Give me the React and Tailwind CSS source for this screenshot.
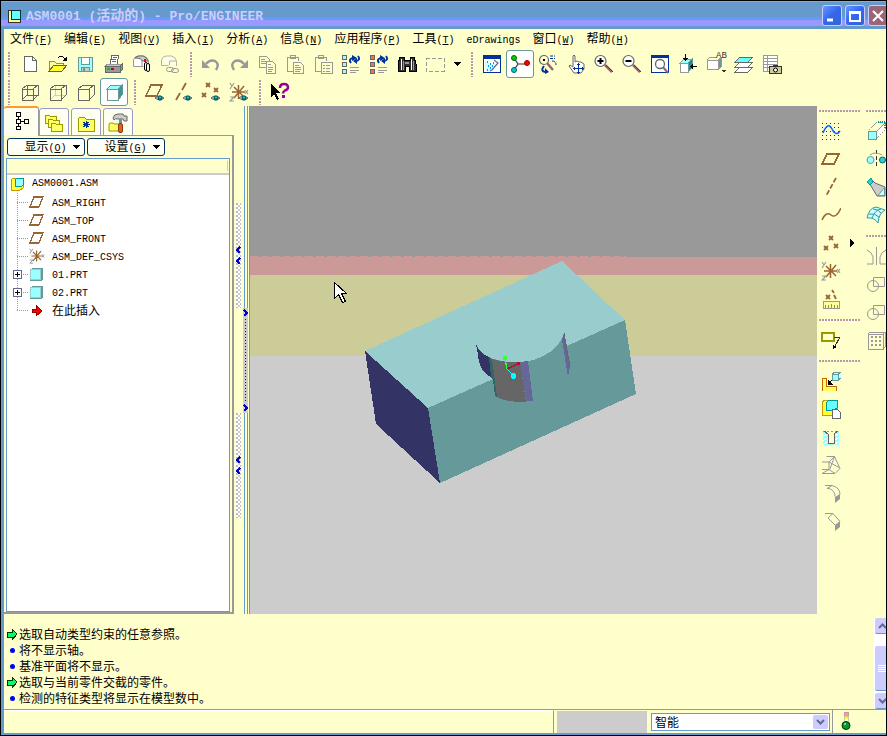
import { clsx } from 'clsx';

const brown = '#996633';

function Glyph({ children, w = 20, h = 20 }) {
  return (
    <svg width={w} height={h} viewBox={`0 0 ${w} ${h}`} fill="none" shapeRendering="crispEdges" className="shrink-0" aria-hidden="true">
      {children}
    </svg>
  );
}

const crossPath = (x, y) => `M${x} ${y}l4 4M${x + 4} ${y}l-4 4`;

const Eye = () => (
  <g shapeRendering="auto">
    <path d="M10 16q4-4 9 0q-4 4-9 0z" fill="#ccc" stroke="#666" />
    <circle cx="15" cy="16" r="2.5" fill="#006666" />
    <circle cx="15" cy="15.5" r="1" fill="#33cccc" />
  </g>
);

const Csys = () => (
  <g shapeRendering="auto">
    <path d="M9.500 3v14M3 10h13M5 5l10 10M15 4L5 16" stroke={brown} strokeWidth="1.500" />
    <path d="M1 1l2 3M5 1L1 7M1 15h4l-4 4h4M16 8l3 4M19 8l-3 4" stroke="#999" strokeWidth="1.200" />
  </g>
);

const Cube = ({ face, side, top, dark }) => (
  <g stroke={dark || '#669999'}>
    <path d="M3 7h11v11H3z" fill={face} />
    <path d="M3 7l4-4h11l-4 4z" fill={top} />
    <path d="M14 7l4-4v10l-4 5z" fill={side} />
  </g>
);

const Lens = ({ sign }) => (
  <g shapeRendering="auto">
    <path d="M11 11l7 7" stroke="#996666" strokeWidth="2.5" />
    <path d="M12 11l7 7" stroke="#663333" />
    <circle cx="6.500" cy="7" r="5.500" fill="#fff" stroke="#666" strokeWidth="1.200" />
    <path d={sign} stroke="#000" strokeWidth="2" />
  </g>
);

const Clipboard = () => (
  <path d="M9 17H2V3h11v4M5 3V1h5v3H5z" stroke="#999" />
);

const Regen = ({ c }) => (
  <g>
    <path d="M1 1h4v4H1zM1 8h4v4H1zM1 15h4v4H1z" fill={c} stroke="#666" />
    <path d="M9 13h9M9 16h9M9 18h6" stroke="#999" />
    <g shapeRendering="auto">
      <path d="M10 9q-3-4 2-5M17 2q3 4-2 5" stroke="#003399" strokeWidth="2" />
      <path d="M11 1l5 3-5 3zM16 4l-4 3 4 3z" fill="#003399" />
    </g>
  </g>
);

const icons = {
  new: <path d="M4 2h8l4 4v11H4zM12 2v4h4" fill="#fff" stroke="#666" />,
  open: (
    <g>
      <path d="M1 17V7h5l2 2h7v3" fill="#ffff99" stroke="#999900" />
      <path d="M1 17l5-6h13l-5 6z" fill="#ffff33" stroke="#666633" />
      <path d="M10 4q4-4 7 1" stroke="#000" />
      <path d="M19 2v5h-5z" fill="#000" />
    </g>
  ),
  save: (
    <g>
      <path d="M2 3h14v14H2z" fill="#99ffff" stroke="#669999" />
      <path d="M5 3h8v7H5z" fill="#fff" stroke="#669999" />
      <path d="M5 13h8v4H5z" fill="#ccc" stroke="#669999" />
      <path d="M7 14h2v3H7z" fill="#669999" />
    </g>
  ),
  print: (
    <g>
      <path d="M6 10l2-9h7l-2 9z" fill="#fff" stroke="#666" />
      <path d="M9 3h4M8 5h4M8 7h4" stroke="#666" />
      <path d="M1 12l3-2h14l-2 2z" fill="#ccc" stroke="#999" />
      <path d="M1 12h15v6H1z" fill="#999" stroke="#666" />
      <path d="M16 12l2-2v6l-2 2z" fill="#999" stroke="#666" />
      <path d="M3 14h3v2H3z" fill="#0c0" />
      <path d="M7 14h3v2H7z" fill="#c00" />
    </g>
  ),
  mail: (
    <g shapeRendering="auto">
      <path d="M1.500 12.500V6q1-4 5-4h5q4 1 5 5v5" fill="#fff" stroke="#999" />
      <path d="M3 4q2-2 4-2h4q4 1 5 5h-6q0-3-7-3z" fill="#ccc" stroke="#666" />
      <path d="M1.500 12.500h10M10 7v5" stroke="#999" />
      <path d="M12 5h2v3h-2z" fill="#f00" />
      <rect x="12.500" y="8.500" width="3" height="8" rx="1.500" fill="#fff" stroke="#000" />
      <rect x="14.500" y="9.500" width="3" height="8" rx="1.500" fill="#fff" stroke="#000" />
    </g>
  ),
  link: (
    <g stroke="#b3b3a0" shapeRendering="auto">
      <path d="M1.500 11.500V6q1-4 5-4h5q4 1 5 5v5M1.500 11.500h7M9.500 11V7h7" fill="#ffffe6" />
      <rect x="6.500" y="13.500" width="7" height="4" rx="2" stroke="#999" />
      <rect x="11.500" y="14.500" width="7" height="4" rx="2" stroke="#999" />
    </g>
  ),
  undo: (
    <g shapeRendering="auto">
      <path d="M5 10q4-5 9-3 5 3 1 9" stroke="#999" strokeWidth="2.500" />
      <path d="M1 6v8h8z" fill="#999" />
    </g>
  ),
  redo: (
    <g shapeRendering="auto">
      <path d="M15 10q-4-5-9-3-5 3-1 9" stroke="#999" strokeWidth="2.500" />
      <path d="M19 6v8h-8z" fill="#999" />
    </g>
  ),
  copy: (
    <g stroke="#999">
      <path d="M2 2h7l3 3v8H2zM4 5h4M4 7h6M4 9h6" fill="#ffffcc" />
      <path d="M9 7h6l3 3v9H9zM11 10h3M11 13h5M11 15h5M11 17h4" fill="#ffffcc" />
    </g>
  ),
  paste: (
    <g stroke="#999">
      <Clipboard />
      <path d="M8 8h7l3 3v8H8zM10 11h4M10 13h6M10 15h6M10 17h5" fill="#ffffcc" />
    </g>
  ),
  pasteSpecial: (
    <g stroke="#999">
      <Clipboard />
      <path d="M8 8h11v11H8z" fill="#ffffcc" />
      <path d="M10 11h2M10 14h2M10 17h2M13 11h4M13 14h4M13 17h4" />
    </g>
  ),
  regen: <Regen c="#99ffff" />,
  regenRed: <Regen c="#ff6666" />,
  find: (
    <g>
      <path d="M3 3h4v3h6V3h4l2 7v7h-7v-5H8v5H1v-7z" fill="#333" stroke="#000" />
      <path d="M4 5v11M14 5v11" stroke="#fff" />
      <path d="M6 7v9M16 7v9" stroke="#999" />
      <path d="M8 9h4" stroke="#999" strokeWidth="2" />
    </g>
  ),
  select: <path d="M1 4h18v13H1z" stroke="#999" strokeDasharray="4 2" />,
  spin: (
    <g>
      <path d="M1.500 1.500h17v17h-17z" fill="#fff" stroke="#003399" />
      <path d="M1 1h18v4H1z" fill="#003399" />
      <path d="M3 7l11 4-6 6-5-1z" fill="#ccffff" />
      <path d="M5 8h1M8 10h1M6 12h1M10 12h1M8 14h1M5 16h1M11 9h1" stroke="#0099ff" strokeWidth="1.500" />
      <path d="M12 6l4 3-6 7-2 1" stroke="#669" strokeWidth="1.200" shapeRendering="auto" />
    </g>
  ),
  center: (
    <g shapeRendering="auto">
      <path d="M4 4l4 6-4 6M8 10h9" stroke="#333" strokeWidth="1.200" />
      <circle cx="4" cy="4" r="2.500" fill="#00cc00" stroke="#006600" />
      <circle cx="4" cy="16" r="2.500" fill="#00cccc" stroke="#006666" />
      <circle cx="17" cy="9" r="2.500" fill="#f00" stroke="#900" />
    </g>
  ),
  orient: (
    <g shapeRendering="auto">
      <path d="M9 9l6 7" stroke="#996666" strokeWidth="2.500" />
      <circle cx="6" cy="6" r="4.500" fill="#ffffcc" stroke="#666" strokeWidth="1.200" />
      <path d="M5 5h2v2H5z" fill="#000" />
      <path d="M12 2h5M12 4.500h5M14 7q4 0 4 4" stroke="#003399" strokeDasharray="3 1" />
      <path d="M6 12q-4 5 1 6" stroke="#003399" strokeWidth="2" />
      <path d="M7 14v6l4-2z" fill="#003399" />
    </g>
  ),
  pan: (
    <g>
      <path d="M7 10V2q1-2 2 0v6l2-1 2 1 2 0 3 2v5l-3 4H8l-5-7 1-1 3 2z" fill="#fff" stroke="#666" shapeRendering="auto" />
      <path d="M12 10v9M8 14.500h9" stroke="#003399" />
      <path d="M12.500 9l2 2h-4zM12.500 20l2-2h-4zM7 14.500l2-2v4zM18 14.500l-2-2v4z" fill="#003399" />
    </g>
  ),
  zoomIn: <Lens sign="M3.500 7h6M6.500 4v6" />,
  zoomOut: <Lens sign="M3.500 7h6" />,
  refit: (
    <g>
      <path d="M1.500 1.500h17v17h-17z" fill="#fff" stroke="#003399" />
      <path d="M1 1h18v3H1z" fill="#003399" />
      <g shapeRendering="auto">
        <circle cx="10" cy="10" r="4.500" stroke="#666" strokeWidth="1.300" fill="#fff" />
        <path d="M13 13l5 6" stroke="#996666" strokeWidth="2" />
      </g>
    </g>
  ),
  reorient: (
    <g>
      <path d="M2 9h8v9H2z" fill="#fff" stroke="#999" />
      <path d="M2 9l4-4h8l-4 4z" fill="#99ffff" stroke="#999" />
      <path d="M10 9l4-4v9l-4 4z" fill="#009999" stroke="#669999" />
      <path d="M7 0v6M13 12h6" stroke="#000" />
      <path d="M5 4h5L7.500 7zM15 10v5l-3-2.500z" fill="#000" />
    </g>
  ),
  saved: (
    <g>
      <path d="M1 6h11v9H1z" fill="#fff" stroke="#999" />
      <path d="M1 6l3-3h7" stroke="#999" />
      <path d="M12 6l3-2v9l-3 2z" fill="#669999" stroke="#999" />
      <path d="M15 16h5l-2 3z" fill="#333" />
    </g>
  ),
  layers: (
    <g stroke="#666">
      <path d="M1 18l5-5h13l-5 5z" fill="#fff" />
      <path d="M1 13l5-5h13l-5 5z" fill="#fff" />
      <path d="M1 8l5-5h13l-5 5z" fill="#66ffff" />
    </g>
  ),
  viewmgr: (
    <g>
      <path d="M1 1h14v16H1z" fill="#fff" />
      <path d="M1 1h14v16H1zM5 1v16M1 4h14M1 7h14M1 10h14M1 13h7" stroke="#999" />
      <path d="M7.500 12.500h12v7h-12z" fill="#cccc99" stroke="#333" />
      <path d="M11 11h5v2h-5z" fill="#333" />
      <circle cx="13.500" cy="16" r="2" fill="#fff" stroke="#000" shapeRendering="auto" />
    </g>
  ),
  wire: <path d="M2 7h11v11H2zM7 3h11v10H7zM2 7l5-4M13 7l5-4M2 18l5-5M13 18l5-5" stroke="#666" />,
  hidden: (
    <g>
      <path d="M7 3v10h11M2 18l5-5" stroke="#ccc" />
      <path d="M2 7h11v11H2zM2 7l5-4h11v10l-5 5M13 7l5-4" stroke="#666" />
    </g>
  ),
  nohidden: <path d="M2 7h11v11H2zM2 7l5-4h11v10l-5 5M13 7l5-4" stroke="#666" />,
  shaded: <Cube face="#fff" side="#339999" top="#99ffff" />,
  plane: <path d="M1 15L6 5h12l-5 10z" stroke={brown} strokeWidth="1.500" />,
  planeEye: <g><path d="M1 14L6 3h11l-5 11z" stroke={brown} strokeWidth="1.500" /><Eye /></g>,
  axisEye: <g><path d="M13 1l-4 7M7 11l-4 7" stroke={brown} strokeWidth="1.800" shapeRendering="auto" /><Eye /></g>,
  pointEye: <g><path d={`${crossPath(5, 1)}${crossPath(13, 6)}${crossPath(1, 11)}`} stroke={brown} strokeWidth="1.800" shapeRendering="auto" /><Eye /></g>,
  csysEye: <g><Csys /><Eye /></g>,
  help: (
    <g>
      <path d="M1 2v13l3-3 3 6 2-1-3-6h4z" fill="#000" />
      <g shapeRendering="auto">
        <path d="M10 6q0-4 4-4 4 0 4 3.500 0 2-3 3-2 1-2 3" stroke="#990099" strokeWidth="2.500" />
        <path d="M12 13h3v3h-3z" fill="#990099" />
      </g>
    </g>
  ),
  sketch: (
    <g>
      <path d="M1 2h19M1 6h19M1 10h19M1 14h19M1 18h19" stroke="#003399" strokeDasharray="1 3" />
      <path d="M2 12q5-12 9-4 4 8 8 2" stroke="#0066ff" strokeWidth="1.500" shapeRendering="auto" />
    </g>
  ),
  axis: <path d="M15 1L5 19" stroke={brown} strokeWidth="1.800" strokeDasharray="5 2" shapeRendering="auto" />,
  curve: <path d="M1 15q4-9 9-5t10-7" stroke={brown} strokeWidth="1.500" shapeRendering="auto" />,
  points: <path d={`${crossPath(8, 3)}${crossPath(3, 13)}${crossPath(13, 11)}`} stroke={brown} strokeWidth="1.800" shapeRendering="auto" />,
  csys: <Csys />,
  analysis: (
    <g>
      <path d={`${crossPath(5, 6)}M11 1l2 3M13 6l2 4`} stroke={brown} strokeWidth="1.800" shapeRendering="auto" />
      <path d="M2 12h16v7H2z" fill="#ffff99" stroke="#999" />
      <path d="M4 19v-3M7 19v-3M10 19v-4M13 19v-3M16 19v-3" stroke="#999933" />
    </g>
  ),
  annotate: (
    <g>
      <path d="M1 3h12v8H1z" stroke="#999900" strokeWidth="1.200" />
      <path d="M13 7h6l-6 11" stroke="#333" />
      <path d="M12 15v4l4-2z" fill="#000" />
    </g>
  ),
  assemble: (
    <g>
      <path d="M1 7h4v8h10v5H1z" fill="#ffff66" stroke="#cc6600" />
      <path d="M11 3h6v6h-6z" fill="#99ffff" stroke="#669999" />
      <path d="M11 3l3-2h6l-3 2M20 1v6l-3 2" fill="#ccffff" stroke="#669999" />
      <path d="M11 9l-3 3" stroke="#000" />
      <path d="M7 9v5h5z" fill="#000" />
    </g>
  ),
  create: (
    <g>
      <path d="M1 3l3-2h12v12l-3 3H1z" fill="#ffff33" stroke="#cc9900" />
      <path d="M5 4l3-3h8v8l-3 2H5z" fill="#66ffff" stroke="#009999" />
      <path d="M11 10h5l3 3v6h-8z" fill="#fff" stroke="#666" />
    </g>
  ),
  hole: (
    <g>
      <path d="M2 4l5 3v10h6V7l5-3v14H2z" fill="#99ffff" />
      <path d="M2 10l5-4M2 14l5-4M2 18l5-4M13 10l5-4M13 14l5-4M13 18l5-4" stroke="#fff" />
      <path d="M2 4h16" stroke="#999" strokeDasharray="2 2" />
      <path d="M8 7h5v9H8z" fill="#ffffcc" />
      <path d="M3 4l4 3v9h6V7l4-3" stroke="#666" />
    </g>
  ),
  draft: (
    <path d="M5.500 1.500h8l5.500 12-5 5H1M1 7h7v7.500H1M8 7l5.500-5.500M1 18.500l7-4 6 4M8 7l11 6M13.500 1.500L9 14" stroke="#999" shapeRendering="auto" />
  ),
  round: (
    <g shapeRendering="auto">
      <path d="M4 2.500h7q8 2 8 9M6 5.500h2q6 2 6 8M6 5.500l5-3" stroke="#999" />
      <path d="M14 14l5-3v5l-5 4z" fill="#999" />
    </g>
  ),
  chamfer: (
    <g shapeRendering="auto">
      <path d="M4 2.500h8l7 8M7 7l7 7M7 7l5-4.500" stroke="#999" />
      <path d="M14 14l5-4v6l-5 4z" fill="#999" />
    </g>
  ),
  copyGeom: (
    <g>
      <path d="M10 10l8-7v7l-8 8z" fill="#fff" />
      <path d="M3 9l8-8h8v8l-8 8" stroke="#999" strokeDasharray="2 1" />
      <path d="M11 10l8-8" stroke="#999" />
      <path d="M12 1h7v6" stroke="#009999" strokeDasharray="1 1" strokeWidth="2" />
      <path d="M2 10h8v8H2z" fill="#99ffff" stroke="#669999" />
    </g>
  ),
  mirror: (
    <g shapeRendering="auto">
      <circle cx="4.500" cy="11" r="3.500" fill="#99ffff" stroke="#669999" />
      <circle cx="16.500" cy="11" r="3" fill="#33cccc" stroke="#006666" />
      <path d="M10.500 1v18" stroke="#333" strokeDasharray="4 2" />
      <path d="M4 6q5-4 12 0" stroke="#999" />
    </g>
  ),
  sweep: (
    <g shapeRendering="auto">
      <path d="M5 2L2 5l3 4 6 10h8v-9L9 6z" fill="#ccc" stroke="#666" />
      <path d="M1 5l4-4 2 4-3 3z" fill="#33cccc" stroke="#009999" />
      <path d="M12 18.500l6.500-8v8z" fill="#ccffff" stroke="#669999" />
    </g>
  ),
  surface: (
    <g shapeRendering="auto">
      <path d="M1 13q2-10 9-11l9 3q-6 3-7 13-4-6-11-5z" fill="#ccffff" stroke="#339999" />
      <path d="M6 13Q9 5 15 4M3 9q6-1 10 3M7 4q5 0 8 4" stroke="#339999" />
    </g>
  ),
  mirrorGray: <path d="M10.500 1v18M1 4q5 2 6 7v7H1M20 4q-5 2-6 7v7h6" stroke="#999" shapeRendering="auto" />,
  merge: <g stroke="#999" shapeRendering="auto"><circle cx="7" cy="12" r="5.500" /><path d="M7.500 3.500h11v9h-11z" /></g>,
  pattern: (
    <g>
      <path d="M2 4h15v15H2zM2 4l2-2h15v15l-2 2M17 4l2-2" stroke="#999" />
      <path d="M5 7h10M5 11h10M5 15h10" stroke="#999" strokeWidth="2" strokeDasharray="2 2" />
    </g>
  ),
};

const fileTools = ['new', 'open', 'save', 'print', 'mail', 'link'];
const editTools = ['undo', 'redo', 'copy', 'paste', 'pasteSpecial', 'regen', 'regenRed', 'find', 'select'];
const viewTools = ['spin', 'center', 'orient', 'pan', 'zoomIn', 'zoomOut', 'refit', 'reorient', 'saved', 'layers', 'viewmgr'];
const displayTools = ['wire', 'hidden', 'nohidden', 'shaded'];
const datumTools = ['planeEye', 'axisEye', 'pointEye', 'csysEye'];

const menus = [
  ['文件', 'F'], ['编辑', 'E'], ['视图', 'V'], ['插入', 'I'], ['分析', 'A'], ['信息', 'N'],
  ['应用程序', 'P'], ['工具', 'T'], ['eDrawings'], ['窗口', 'W'], ['帮助', 'H'],
];

const messages = [
  { prompt: true, text: '选取自动类型约束的任意参照。' },
  { text: '将不显示轴。' },
  { text: '基准平面将不显示。' },
  { prompt: true, text: '选取与当前零件交截的零件。' },
  { text: '检测的特征类型将显示在模型数中。' },
];

const tree = [
  { name: 'ASM_RIGHT', kind: 'plane' },
  { name: 'ASM_TOP', kind: 'plane' },
  { name: 'ASM_FRONT', kind: 'plane' },
  { name: 'ASM_DEF_CSYS', kind: 'csys' },
  { name: '01.PRT', kind: 'part' },
  { name: '02.PRT', kind: 'part' },
  { name: '在此插入', kind: 'insert' },
];

const Latin = ({ children }) => (
  <span className="font-['Liberation_Mono',monospace] text-[10px]">{children}</span>
);

function Label({ text, hotkey }) {
  return (
    <>
      {/^[\w.]+$/.test(text) ? <Latin>{text}</Latin> : text}
      {hotkey && <Latin>(<u>{hotkey}</u>)</Latin>}
    </>
  );
}

function Tool({ name, active }) {
  return (
    <button
      aria-label={name}
      className={clsx('flex h-7 w-7 shrink-0 items-center justify-center', active && 'rounded-[3px] border border-[#669999] bg-white')}
    >
      <span className="relative flex">
        <Glyph>{icons[name]}</Glyph>
        {name === 'saved' && (
          <span className="absolute left-2.5 -top-1 font-['Liberation_Mono',monospace] text-[9px] leading-3 text-[#333]">AB</span>
        )}
      </span>
    </button>
  );
}

const Tools = ({ names, active }) => names.map((n) => <Tool key={n} name={n} active={n === active} />);

const VSep = ({ first }) => (
  <span className={clsx('flex shrink-0 justify-center', first ? 'w-3 pr-0.5' : 'w-[13px]')}>
    <span className="h-[25px] w-0.5 bg-[repeating-linear-gradient(to_bottom,#c99_0_1px,#a99_1px_2px,#fff_2px_3px)]" />
  </span>
);

const HSep = ({ first }) => (
  <span className={clsx('flex w-full shrink-0 pl-0.5', first ? 'h-[11px] pt-1' : 'h-[13px] pt-1.5')}>
    <span className="h-0.5 w-full bg-[repeating-linear-gradient(to_right,#c99_0_1px,#a99_1px_2px,#fff_2px_3px)]" />
  </span>
);

const CaptionButton = ({ label, close, children }) => (
  <button
    aria-label={label}
    className={clsx('flex h-[21px] w-5 shrink-0 items-center justify-center rounded-[3px] border border-[#ccccff]', close ? 'bg-[#996677]' : 'bg-[linear-gradient(135deg,#69f,#36e_50%,#36c)]')}
  >
    <svg width="14" height="14" viewBox="0 0 14 14" fill="none" stroke="#fff" strokeWidth="2">{children}</svg>
  </button>
);

function TitleBar() {
  return (
    <header className="flex h-7 shrink-0 items-center overflow-hidden border-t border-[#9999ff] bg-[linear-gradient(to_bottom,#69c_0_15px,#69f_15px_18px,#99f_18px_24px,#69c_24px)] pl-1.5">
      <Glyph w={14} h={14}>
        <path d="M1 1h12v12H1z" fill="#ffff99" stroke="#333" />
        <path d="M4 1h9v9H4z" fill="#66ffff" stroke="#003333" />
      </Glyph>
      <h1 className="ml-[5px] grow whitespace-nowrap text-[14px] leading-5 font-bold text-[#ccccff]">
        <span className="font-['Liberation_Mono',monospace] text-[13px]">ASM0001 (</span>活动的
        <span className="font-['Liberation_Mono',monospace] text-[13px]">) - Pro/ENGINEER</span>
      </h1>
      <div className="flex gap-[3px]">
        <CaptionButton label="最小化"><path d="M2 11h6" strokeWidth="3" /></CaptionButton>
        <CaptionButton label="最大化"><path d="M2 3h10v9H2zM2 4h10" /></CaptionButton>
        <div className="-mr-0.5 flex"><CaptionButton label="关闭" close><path d="M2 2l10 10M12 2L2 12" /></CaptionButton></div>
      </div>
    </header>
  );
}

function NodeIcon({ kind }) {
  return (
    <Glyph w={16} h={16}>
      {kind === 'plane' && <path d="M1 13L5 3h9l-4 10z" stroke={brown} strokeWidth="1.300" />}
      {kind === 'csys' && <g transform="scale(.8)"><Csys /></g>}
      {kind === 'part' && (
        <g>
          <path d="M1 4l2-2h11v11l-2 2H1z" fill="#669999" />
          <path d="M1.500 3.500h10v10h-10z" fill="#99ffff" stroke="#99cccc" />
        </g>
      )}
      {kind === 'insert' && <path d="M3 7h4V3l6 6-6 5v-4H3z" fill="#f00" stroke="#900" />}
    </Glyph>
  );
}

function ModelTree() {
  return (
    <ul className="grow overflow-hidden">
      <li>
        <button className="flex h-[18px] items-center gap-2 pl-[3px]">
          <Glyph w={14} h={14}>
            <path d="M1 3l2-2h10v10l-3 2H1z" fill="#ffff33" stroke="#cc9900" />
            <path d="M5 3l2-2h6v7l-1 1H5z" fill="#99ffff" stroke="#009999" />
          </Glyph>
          <Latin>ASM0001.ASM</Latin>
        </button>
        <ul>
          {tree.map(({ name, kind }, i) => (
            <li key={name}>
              <button className="flex h-[18px] items-center">
                <Glyph w={22} h={18}>
                  <path d={i === tree.length - 1 ? 'M10.500 0v9' : 'M10.500 0v18'} stroke="#999" strokeDasharray="1 1" />
                  <path d="M10 9.500h12" stroke="#999" strokeDasharray="1 1" />
                  {kind === 'part' && (
                    <g>
                      <path d="M6.500 5.500h8v8h-8z" fill="#fff" stroke="#669" />
                      <path d="M8 9.500h5M10.500 7v5" stroke="#000" />
                    </g>
                  )}
                </Glyph>
                <NodeIcon kind={kind} />
                <span className="ml-[7px]"><Label text={name} /></span>
              </button>
            </li>
          ))}
        </ul>
      </li>
    </ul>
  );
}

const Folder = ({ x, y, children }) => (
  <g transform={`translate(${x} ${y})`}>
    <path d="M0 9V2l1-1h3l1 1h6v7z" fill="#ffff66" stroke="#999900" />
    {children}
  </g>
);

const tabIcons = [
  <path key="t" d="M5 2h4v4H5zM5 9h4v4H5zM5 16h4v3H5zM13 9h4v4h-4zM7 6v3M7 13v3M9 11h4" stroke="#000" />,
  <g key="f"><Folder x={1} y={1} /><Folder x={4} y={5} /><Folder x={7} y={9} /></g>,
  <g key="s">
    <path d="M2 18V6l2-2h4l2 2h8v12z" fill="#ffff66" stroke="#999900" />
    <path d="M10 8v7M6.500 11.500h7M7.500 9l5 5M12.500 9l-5 5" stroke="#003399" />
  </g>,
  <g key="h" shapeRendering="auto">
    <Folder x={1} y={9} />
    <path d="M5 5q1-4 5-4h5l1 2h3v5h-3l-1-2h-5q-3-1-4 1z" fill="#ccc" stroke="#666" />
    <path d="M11 6h3v5h-3z" fill="#669999" />
    <rect x="10.500" y="10.500" width="4" height="9" rx="1.500" fill="#cc6633" stroke="#993300" />
  </g>,
];

function DropButton({ text, hotkey }) {
  return (
    <button className="flex h-[18px] w-[78px] items-center justify-center gap-1.5 rounded-[3px] border-[1.500px] border-[#003366] bg-[linear-gradient(to_bottom,#fff,#ffe)] pl-3">
      <span><Label text={text} hotkey={hotkey} /></span>
      <Glyph w={7} h={4}><path d="M0 0h7L3.500 4z" fill="#000" /></Glyph>
    </button>
  );
}

function Navigator() {
  return (
    <aside className="flex w-[230px] shrink-0 flex-col">
      <div role="tablist" className="flex h-[30px] items-end">
        {tabIcons.map((icon, i) => (
          <button
            key={i}
            role="tab"
            aria-selected={i === 0}
            aria-label={['模型树', '文件夹浏览器', '收藏夹', '连接'][i]}
            className={clsx(
              'flex justify-center rounded-t-[3px]',
              i === 0 ? 'h-[30px] w-[35px] border-t-2 border-r border-t-[#ff9933] border-r-[#999] bg-[#fffff0] pt-0.5' : 'mr-0.5 h-[28px] w-[30px] border border-[#9999cc] bg-[#fffff0] pt-1'
            )}
          >
            <Glyph>{icon}</Glyph>
          </button>
        ))}
      </div>
      <div className="-mt-px ml-[35px] border-t border-[#999]" />
      <div className="flex grow flex-col border-r-2 border-b-2 border-[#999] pr-0.5">
        <div className="flex gap-0.5 py-[2px] pl-[3px]">
          <DropButton text="显示" hotkey="O" />
          <DropButton text="设置" hotkey="G" />
        </div>
        <div className="ml-0.5 flex grow flex-col border border-[#6699cc] bg-white">
          <div className="h-[16px] border-b-2 border-[#ccc] bg-[#ffffcc] py-0.5 pr-px">
            <div className="h-full border-r border-[#ccc]" />
          </div>
          <ModelTree />
        </div>
      </div>
    </aside>
  );
}

function Grip() {
  return (
    <div className="flex h-[105px] flex-col items-center justify-center bg-[#ccc] bg-[conic-gradient(#fff_25%,#ccc_25%_50%,#fff_50%_75%,#bbb_75%)] bg-[size:4px_4px]">
      <Glyph w={5} h={19}>
        <path d="M4 1L1 4l3 3M4 12l-3 3 3 3" stroke="#0000cc" strokeWidth="1.500" />
      </Glyph>
    </div>
  );
}

const Rails = () => <div className="ml-px grow border-x border-[#6699cc]" />;

function Splitter() {
  return (
    <div className="flex w-[16px] shrink-0 gap-0.5 border-r border-[#6699cc] pl-0.5">
      <div className="flex w-[5px] flex-col">
        <div className="grow" /><Grip /><div className="h-[105px]" /><Grip /><div className="grow" />
      </div>
      <div className="flex w-[5px] flex-col">
        <Rails />
        <div className="flex h-[105px] flex-col items-center bg-[#ccc]">
          <Glyph w={5} h={105}>
            <path d="M1 2l3 3-3 3M1 97l3 3-3 3" stroke="#0000cc" strokeWidth="1.500" />
            <path d="M2.500 11v84" stroke="#0000cc" strokeDasharray="1 2" />
          </Glyph>
        </div>
        <Rails />
      </div>
    </div>
  );
}

// 3D window: shaded block with a cylindrical cut and the spin centre
function Viewport() {
  return (
    <div className="relative min-w-0 grow bg-[#ccc]">
      <svg className="absolute inset-0 h-full w-full" viewBox="0 0 567 508" preserveAspectRatio="xMidYMid slice" shapeRendering="crispEdges">
        <path d="M0 0h567v151H0z" fill="#999" />
        <path d="M0 151h567v18H0z" fill="#cc9999" />
        <path d="M0 150.500h376" stroke="#cc9999" strokeDasharray="8 3" />
        <path d="M0 169h567v81H0z" fill="#cccc99" />
        <path d="M115 245L312 155 375 214 178 302z" fill="#99cccc" />
        <path d="M115 245l63 57 12 75-64-59z" fill="#333366" />
        <path d="M178 302l197-88 11 74-196 89z" fill="#669999" />
        <path d="M243 274L240 252Q276 263 300 246 311 238 314 227L317 241z" fill="#669999" />
        <path d="M226 238Q229 247 239 251l3 21-7-5q-6-6-7-18z" fill="#333366" />
        <path d="M239 251l3 2 5 38-2-1-2-16-2-3z" fill="#336666" />
        <path d="M242 253q12 4 28 3l6 40q-21 0-29-5z" fill="#666" />
        <path d="M270 256l8-1 5 40h-7z" fill="#666699" />
        <path d="M312 234l2-7 6 34-2 10z" fill="#666699" />
        <path d="M314 227l6 34" stroke="#666" />
        <path d="M257 263l-2-10" stroke="#33ff33" strokeWidth="1.500" />
        <path d="M257 263l11-5" stroke="#cc0033" strokeWidth="1.500" />
        <path d="M257 263l6 6" stroke="#00ffff" />
        <path d="M253 250h4v4h-4z" fill="#33ff33" />
        <path d="M267 256h3v3h-3z" fill="#cc0033" />
        <circle cx="263.500" cy="270" r="3" fill="#00ffff" />
        <path d="M84.500 176.500v16l4-4 4 8 3-1-4-8h5z" fill="#fff" stroke="#000" />
      </svg>
    </div>
  );
}

function FeatureBars() {
  return (
    <div className="flex w-[69px] shrink-0 gap-1 overflow-hidden">
      <div className="flex w-[43px] flex-col">
        <HSep first />
        <Tools names={['sketch', 'plane', 'axis', 'curve']} />
        <div className="flex items-center">
          <Tool name="points" />
          <Glyph w={14} h={8}><path d="M5 0v8l5-4z" fill="#000" /></Glyph>
        </div>
        <Tools names={['csys', 'analysis']} />
        <HSep />
        <Tool name="annotate" />
        <HSep />
        <Tools names={['assemble', 'create', 'hole', 'draft', 'round', 'chamfer']} />
      </div>
      <div className="flex w-[22px] flex-col">
        <HSep first />
        <div className="-ml-0.5 flex flex-col"><Tools names={['copyGeom', 'mirror', 'sweep', 'surface']} /></div>
        <HSep />
        <div className="-ml-0.5 flex flex-col">
          <Tools names={['mirrorGray', 'merge']} />
          <Tool name="merge" />
          <Tool name="pattern" />
        </div>
      </div>
    </div>
  );
}

const ScrollButton = ({ label, d }) => (
  <button aria-label={label} className="flex h-4 w-3.5 items-center justify-center rounded-[2px] border-b border-[#6699cc] bg-[#ccccff]">
    <svg width="9" height="6" viewBox="0 0 9 6" fill="none" stroke="#666699" strokeWidth="2"><path d={d} /></svg>
  </button>
);

function MessageLog() {
  return (
    <section className="flex h-[95px] shrink-0">
      <ul className="grow pt-3 pl-0.5">
        {messages.map(({ prompt, text }) => (
          <li key={text} className="flex h-4 items-center">
            <Glyph w={13} h={13}>
              {prompt
                ? <path d="M1 4h5V1l5 5-5 6V9H1z" fill="#00ff66" stroke="#003300" />
                : <circle cx="6.500" cy="6.500" r="2.500" fill="#0000ff" shapeRendering="auto" />}
            </Glyph>
            <span>{text}</span>
          </li>
        ))}
      </ul>
      <div className="mt-1 flex w-3 flex-col overflow-hidden bg-white pl-px">
        <ScrollButton label="向上滚动" d="M1 5l3.500-3.500L8 5" />
        <div className="mt-3 flex w-3.5 grow items-center justify-center rounded-[2px] border-b border-[#6699cc] bg-[#ccccff]">
          <Glyph w={8} h={8}><path d="M0 1h8M0 3h8M0 5h8M0 7h8" stroke="#fff" /></Glyph>
        </div>
        <div className="mt-0.5"><ScrollButton label="向下滚动" d="M1 1l3.500 3.500L8 1" /></div>
      </div>
    </section>
  );
}

function StatusBar() {
  return (
    <footer className="flex h-6 shrink-0 border-t border-[#999]">
      <div className="grow border-t border-r border-t-white border-r-[#999]" />
      <div className="ml-[3px] mt-px w-[90px] bg-[#ccc]" />
      <div className="relative ml-1 mt-[3px] h-[18px] w-[179px]">
        <select aria-label="选择过滤器" className="h-full w-full appearance-none border border-[#6699cc] bg-white pl-[3px] leading-4">
          <option>智能</option>
        </select>
        <span className="pointer-events-none absolute top-0.5 right-0.5 flex h-3.5 w-[15px] items-center justify-center rounded-[2px] bg-[#ccccff]">
          <svg width="9" height="6" viewBox="0 0 9 6" fill="none" stroke="#666699" strokeWidth="2"><path d="M1 1l3.500 3.500L8 1" /></svg>
        </span>
      </div>
      <div className="ml-0.5 flex w-[54px] border-l border-[#999] pl-2 pt-px">
        <Glyph w={10} h={20}>
          <path d="M3 1h4v4H3z" fill="#ff9999" stroke="#cc9999" />
          <path d="M3 5h4v4H3z" fill="#ffff00" stroke="#cccc99" />
          <path d="M4 8h3v3H4z" fill="#fff" />
          <circle cx="5" cy="14.500" r="4" fill="#009933" stroke="#003300" shapeRendering="auto" />
          <circle cx="4" cy="13" r="1" fill="#99ff99" shapeRendering="auto" />
        </Glyph>
      </div>
    </footer>
  );
}

export default function App() {
  return (
    <div className="flex h-screen flex-col overflow-hidden border border-black bg-[#ffffcc] font-['Noto_Sans_CJK_SC',sans-serif] text-[12px] leading-4 text-black">
      <TitleBar />
      <div className="flex min-h-0 grow flex-col border-b-2 border-l-[3px] border-[#6699cc]">
        <nav className="flex h-[21px] shrink-0 items-center gap-3 border-b border-white pl-1.5 whitespace-nowrap">
          {menus.map(([text, hotkey]) => (
            <button key={text}><Label text={text} hotkey={hotkey} /></button>
          ))}
        </nav>
        <div className="flex h-7 shrink-0 items-center">
          <VSep first /><Tools names={fileTools} />
          <VSep /><Tools names={editTools} />
          <button aria-label="选择选项" className="flex h-7 w-4 items-center justify-center">
            <Glyph w={8} h={4}><path d="M0 0h8L4 4z" fill="#000" /></Glyph>
          </button>
          <VSep /><Tools names={viewTools} active="center" />
        </div>
        <div className="flex h-7 shrink-0 items-center">
          <VSep first /><Tools names={displayTools} active="shaded" />
          <VSep /><Tools names={datumTools} />
          <VSep /><Tool name="help" />
        </div>
        <main className="flex min-h-0 grow">
          <Navigator />
          <Splitter />
          <Viewport />
          <FeatureBars />
        </main>
        <MessageLog />
        <StatusBar />
      </div>
    </div>
  );
}
